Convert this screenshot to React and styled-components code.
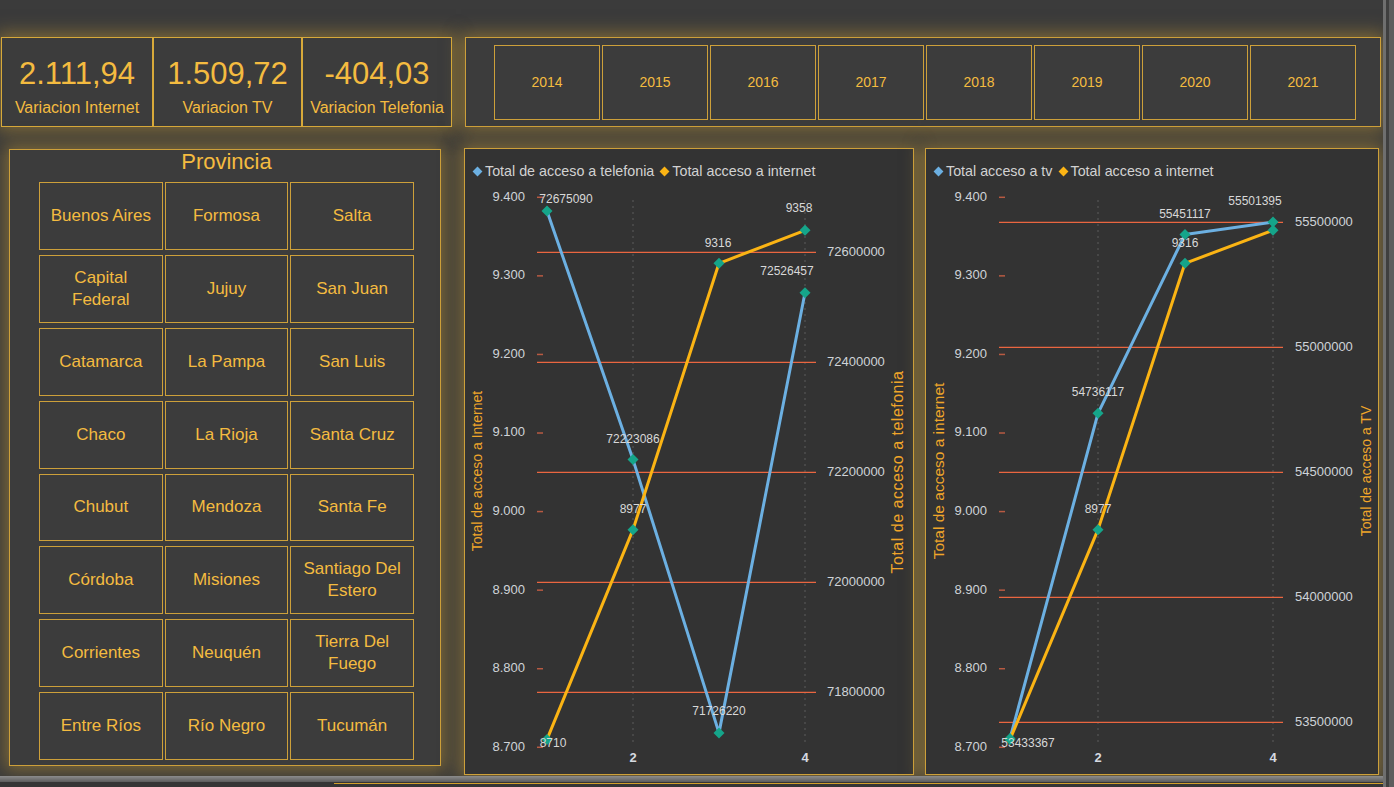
import React from 'react';
import styled, { createGlobalStyle } from 'styled-components';

const GOLD = '#f4bb40';
const BORDER = '#cda03a';
const GLOW = '0 0 16px 4px rgba(180, 142, 52, 0.55)';
const BLUE = '#6cb0e2';
const ORANGE = '#fbb414';
const TEAL = '#15a58a';
const FONT = '"Liberation Sans", Arial, sans-serif';

const Global = createGlobalStyle`
  html, body { margin: 0; padding: 0; background: #3b3b3b; overflow: hidden; }
  body { font-family: ${FONT}; }
  * { box-sizing: border-box; }
`;

const Screen = styled.div`
  width: 1394px;
  height: 787px;
  display: flex;
  background: #3b3b3b;
  overflow: hidden;
`;

const Canvas = styled.div`
  width: 1383px;
  display: flex;
  flex-direction: column;
  padding-top: 37px;
`;

const VScroll = styled.div`
  width: 11px;
  height: 100%;
  background: linear-gradient(to right, #6f6f6f 0 3px, #3f3f3f 3px 6px, #5d5d5d 6px);
`;

const TopRow = styled.div`
  display: flex;
  height: 90px;
  padding-left: 1px;
`;

const KpiGroup = styled.div`
  width: 451px;
  display: flex;
  box-shadow: ${GLOW};
`;

const KpiCard = styled.div`
  flex: ${p => p.$w} 0 0;
  border: 1px solid #d7a93a;
  background: #3c3c3c;
  display: flex;
  flex-direction: column;
  align-items: center;
  padding-top: 19px;
  color: ${GOLD};
`;

const KpiValue = styled.div`
  font-size: 31px;
  line-height: 34px;
`;

const KpiLabel = styled.div`
  font-size: 16px;
  line-height: 18px;
  margin-top: 8px;
  white-space: nowrap;
`;

const SlicerPanel = styled.div`
  margin-left: 13px;
  width: 916px;
  border: 1px solid ${BORDER};
  background: #3c3c3c;
  box-shadow: ${GLOW};
  display: flex;
  gap: 2px;
  padding: 7px 0 6px 28px;
`;

const YearButton = styled.div`
  width: 106px;
  border: 1px solid ${BORDER};
  display: flex;
  align-items: center;
  justify-content: center;
  color: ${GOLD};
  font-size: 14px;
  padding-bottom: 1px;
`;

const MainRow = styled.div`
  display: flex;
  align-items: flex-start;
  height: 627px;
  margin-top: 21px;
  padding-left: 9px;
`;

const ProvincePanel = styled.div`
  width: 432px;
  height: 617px;
  margin-top: 1px;
  border: 1px solid ${BORDER};
  background: #3c3c3c;
  box-shadow: ${GLOW};
  display: flex;
  flex-direction: column;
  padding: 0 26px 5px 29px;
`;

const ProvinceTitle = styled.div`
  color: ${GOLD};
  font-size: 22px;
  line-height: 24px;
  text-align: center;
  margin-bottom: 8px;
`;

const ProvinceGrid = styled.div`
  flex: 1;
  display: grid;
  grid-template-columns: repeat(3, 1fr);
  grid-template-rows: repeat(8, 1fr);
  column-gap: 2px;
  row-gap: 5px;
`;

const ProvinceCell = styled.div`
  border: 1px solid ${BORDER};
  display: flex;
  align-items: center;
  justify-content: center;
  text-align: center;
  padding: 0 9px;
  color: ${GOLD};
  font-size: 17px;
  line-height: 22px;
`;

const ChartPanel = styled.div`
  width: ${p => p.$w}px;
  height: 627px;
  margin-left: ${p => p.$ml}px;
  border: 1px solid ${BORDER};
  background: #333333;
  box-shadow: ${GLOW};
  display: flex;
  flex-direction: column;
`;

const Legend = styled.div`
  height: 32px;
  padding: 11px 0 0 9px;
  display: flex;
  gap: 7px;
  color: #d2d2d2;
  font-size: 14.3px;
  line-height: 16px;
`;

const LegendItem = styled.div`
  display: flex;
  align-items: center;
  gap: 4px;
  white-space: nowrap;
`;

const LegendMarker = styled.span`
  width: 7px;
  height: 7px;
  background: ${p => p.$c};
  transform: rotate(45deg);
  margin-top: 2px;
`;

const PlotSvg = styled.svg`
  display: block;
  font-family: ${FONT};
`;

const AxisText = styled.text`
  font-size: 13px;
  fill: #cfd3d8;
`;

const DataText = styled.text`
  font-size: 12px;
  fill: #d8d8d8;
`;

const XText = styled.text`
  font-size: 13px;
  font-weight: bold;
  fill: #d6dae0;
`;

const TitleText = styled.text`
  font-size: ${p => p.$fs}px;
  letter-spacing: ${p => p.$ls || 0}px;
  fill: #f0a62a;
`;

const HScroll = styled.div`
  margin-top: 1px;
  height: 6px;
  background: linear-gradient(to bottom, #8c8c8c, #5c5c5c);
`;

const Footer = styled.div`
  height: 5px;
  padding: 1px 0 0 334px;
  background: #353535;
`;

const FooterLine = styled.div`
  height: 1px;
  background: #d19f2a;
`;

const provinces = [
  'Buenos Aires', 'Formosa', 'Salta',
  'Capital Federal', 'Jujuy', 'San Juan',
  'Catamarca', 'La Pampa', 'San Luis',
  'Chaco', 'La Rioja', 'Santa Cruz',
  'Chubut', 'Mendoza', 'Santa Fe',
  'Córdoba', 'Misiones', 'Santiago Del Estero',
  'Corrientes', 'Neuquén', 'Tierra Del Fuego',
  'Entre Ríos', 'Río Negro', 'Tucumán',
];

const years = ['2014', '2015', '2016', '2017', '2018', '2019', '2020', '2021'];

const leftTicks = ['9.400', '9.300', '9.200', '9.100', '9.000', '8.900', '8.800', '8.700']
  .map((t, i) => ({ t, y: 197.3 + i * 78.57 }));

const internetY = v => 197.3 + (9400 - v) * 0.7857;

const chart1 = {
  vb: [465, 181, 448, 593],
  legend: [['Total de acceso a telefonia', BLUE], ['Total acceso a internet', ORANGE]],
  leftLabelX: 525, tickX: [537, 543],
  grid: [['72600000', 252.3], ['72400000', 362.3], ['72200000', 472.3], ['72000000', 582.3], ['71800000', 692.3]],
  gridX: [537, 816], rightLabelX: 827,
  vlines: [633, 805],
  series: [
    { c: BLUE, pts: [[547, 211], [633, 459.6], [719, 732.9], [805, 292.7]] },
    { c: ORANGE, pts: [[547, internetY(8710)], [633, internetY(8977)], [719, internetY(9316)], [805, internetY(9358)]] },
  ],
  labels: [['72675090', 566, 200], ['72223086', 633, 440], ['8977', 633, 510], ['9316', 718, 244],
    ['9358', 799, 209], ['72526457', 787, 272], ['71726220', 719, 712], ['8710', 553, 744]],
  leftTitle: { t: 'Total de acceso a Internet', x: 478, y: 471, fs: 14 },
  rightTitle: { t: 'Total de acceso a telefonia', x: 899, y: 472, fs: 16, ls: 0.5 },
};

const chart2 = {
  vb: [926, 181, 452, 593],
  legend: [['Total acceso a tv', BLUE], ['Total acceso a internet', ORANGE]],
  leftLabelX: 987, tickX: [999, 1005],
  grid: [['55500000', 222.3], ['55000000', 347.3], ['54500000', 472.3], ['54000000', 597.3], ['53500000', 722.3]],
  gridX: [999, 1283], rightLabelX: 1295,
  vlines: [1098, 1273],
  series: [
    { c: BLUE, pts: [[1010, 738.5], [1098, 413.3], [1185, 234.5], [1273, 222]] },
    { c: ORANGE, pts: [[1010, internetY(8710)], [1098, internetY(8977)], [1185, internetY(9316)], [1273, internetY(9358)]] },
  ],
  labels: [['53433367', 1028, 744], ['54736117', 1098, 393], ['8977', 1098, 510], ['55451117', 1185, 215],
    ['9316', 1185, 244], ['55501395', 1255, 202]],
  leftTitle: { t: 'Total de acceso a internet', x: 940, y: 471, fs: 15.5 },
  rightTitle: { t: 'Total de acceso a TV', x: 1367, y: 471, fs: 14 },
};

function Diamond({ x, y }) {
  const r = 5.5;
  return <polygon points={`${x},${y - r} ${x + r},${y} ${x},${y + r} ${x - r},${y}`} fill={TEAL} />;
}

function LineChart({ cfg, w, ml }) {
  const [vx, vy, vw, vh] = cfg.vb;
  return (
    <ChartPanel $w={w} $ml={ml}>
      <Legend>
        {cfg.legend.map(([t, c]) => (
          <LegendItem key={t}><LegendMarker $c={c} />{t}</LegendItem>
        ))}
      </Legend>
      <PlotSvg width={vw} height={vh} viewBox={`${vx} ${vy} ${vw} ${vh}`}>
        {cfg.vlines.map(x => (
          <line key={x} x1={x} x2={x} y1={200} y2={745} stroke="#5c5c5c" strokeWidth="1" strokeDasharray="2 4" />
        ))}
        {cfg.grid.map(([t, y]) => (
          <g key={t}>
            <line x1={cfg.gridX[0]} x2={cfg.gridX[1]} y1={y} y2={y} stroke="#ea6640" strokeWidth="1.3" />
            <AxisText x={cfg.rightLabelX} y={y} dominantBaseline="middle">{t}</AxisText>
          </g>
        ))}
        {leftTicks.map(({ t, y }) => (
          <g key={t}>
            <line x1={cfg.tickX[0]} x2={cfg.tickX[1]} y1={y} y2={y} stroke="#b85a42" strokeWidth="1.5" />
            <AxisText x={cfg.leftLabelX} y={y} textAnchor="end" dominantBaseline="middle">{t}</AxisText>
          </g>
        ))}
        <XText x={cfg.vlines[0]} y={759} textAnchor="middle" dominantBaseline="middle">2</XText>
        <XText x={cfg.vlines[1]} y={759} textAnchor="middle" dominantBaseline="middle">4</XText>
        {cfg.series.map(s => (
          <polyline key={s.c} points={s.pts.map(p => p.join(',')).join(' ')} fill="none" stroke={s.c}
            strokeWidth="3" strokeLinejoin="round" strokeLinecap="round" />
        ))}
        {cfg.series.map(s => s.pts.map(([x, y]) => <Diamond key={`${s.c}${x}`} x={x} y={y} />))}
        {cfg.labels.map(([t, x, y]) => (
          <DataText key={t + x} x={x} y={y} textAnchor="middle" dominantBaseline="middle">{t}</DataText>
        ))}
        <TitleText $fs={cfg.leftTitle.fs} x={cfg.leftTitle.x} y={cfg.leftTitle.y} textAnchor="middle"
          dominantBaseline="middle" transform={`rotate(-90 ${cfg.leftTitle.x} ${cfg.leftTitle.y})`}>
          {cfg.leftTitle.t}
        </TitleText>
        <TitleText $fs={cfg.rightTitle.fs} $ls={cfg.rightTitle.ls} x={cfg.rightTitle.x} y={cfg.rightTitle.y}
          textAnchor="middle" dominantBaseline="middle"
          transform={`rotate(-90 ${cfg.rightTitle.x} ${cfg.rightTitle.y})`}>
          {cfg.rightTitle.t}
        </TitleText>
      </PlotSvg>
    </ChartPanel>
  );
}

export default function App() {
  return (
    <Screen>
      <Global />
      <Canvas>
        <TopRow>
          <KpiGroup>
            <KpiCard $w={152}><KpiValue>2.111,94</KpiValue><KpiLabel>Variacion Internet</KpiLabel></KpiCard>
            <KpiCard $w={149}><KpiValue>1.509,72</KpiValue><KpiLabel>Variacion TV</KpiLabel></KpiCard>
            <KpiCard $w={150}><KpiValue>-404,03</KpiValue><KpiLabel>Variacion Telefonia</KpiLabel></KpiCard>
          </KpiGroup>
          <SlicerPanel>
            {years.map(y => <YearButton key={y}>{y}</YearButton>)}
          </SlicerPanel>
        </TopRow>
        <MainRow>
          <ProvincePanel>
            <ProvinceTitle>Provincia</ProvinceTitle>
            <ProvinceGrid>
              {provinces.map(p => <ProvinceCell key={p}>{p}</ProvinceCell>)}
            </ProvinceGrid>
          </ProvincePanel>
          <LineChart cfg={chart1} w={450} ml={23} />
          <LineChart cfg={chart2} w={454} ml={11} />
        </MainRow>
        <HScroll />
        <Footer><FooterLine /></Footer>
      </Canvas>
      <VScroll />
    </Screen>
  );
}
